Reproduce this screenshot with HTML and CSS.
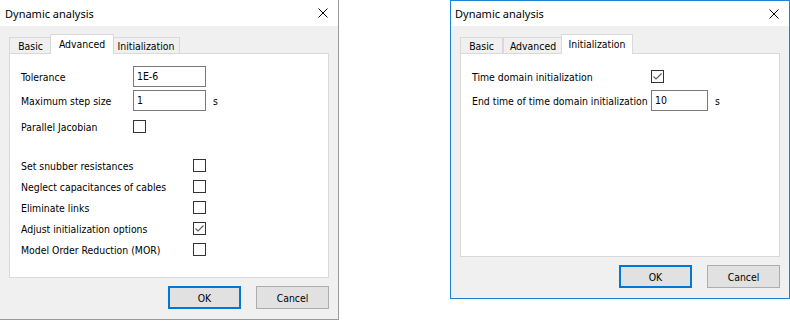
FILE: index.html
```html
<!DOCTYPE html>
<html lang="en">
<head>
    <meta charset="UTF-8">
    <meta name="viewport" content="width=device-width, initial-scale=1.0">
    <title>Dynamic analysis</title>
    <link rel="stylesheet" href="styles.css">
</head>
<body>
    <div class="desk">
        <!-- inactive window, Advanced tab -->
        <div class="dialog dialog-back">
            <div class="titlebar">
                <span class="title">Dynamic analysis</span>
                <svg class="close" width="10" height="10" viewBox="0 0 10 10"><path d="M0.5 0.5L9.5 9.5M9.5 0.5L0.5 9.5" stroke="#000" stroke-width="1" fill="none"/></svg>
            </div>
            <div class="body">
                <div class="tabs">
                    <div class="tab tab-basic">Basic</div>
                    <div class="tab tab-adv current">Advanced</div>
                    <div class="tab tab-init">Initialization</div>
                </div>
                <div class="panel panel-adv">
                    <div class="row">
                        <span class="lbl lbl-short">Tolerance</span>
                        <div class="field">1E-6</div>
                    </div>
                    <div class="row row-gap3">
                        <span class="lbl lbl-short">Maximum step size</span>
                        <div class="field">1</div>
                        <span class="unit">s</span>
                    </div>
                    <div class="row row-gap5">
                        <span class="lbl lbl-short">Parallel Jacobian</span>
                        <span class="check"></span>
                    </div>
                    <div class="row row-group">
                        <span class="lbl lbl-long">Set snubber resistances</span>
                        <span class="check"></span>
                    </div>
                    <div class="row">
                        <span class="lbl lbl-long">Neglect capacitances of cables</span>
                        <span class="check"></span>
                    </div>
                    <div class="row">
                        <span class="lbl lbl-long">Eliminate links</span>
                        <span class="check"></span>
                    </div>
                    <div class="row">
                        <span class="lbl lbl-long">Adjust initialization options</span>
                        <span class="check"><svg width="11" height="11" viewBox="0 0 11 11"><path d="M1.5 5.5L4 8L9.5 2.5" stroke="#5b5b5b" stroke-width="1.1" fill="none"/></svg></span>
                    </div>
                    <div class="row">
                        <span class="lbl lbl-long">Model Order Reduction (MOR)</span>
                        <span class="check"></span>
                    </div>
                </div>
                <div class="footer">
                    <button class="btn default">OK</button>
                    <button class="btn">Cancel</button>
                </div>
            </div>
        </div>

        <!-- active window, Initialization tab -->
        <div class="dialog dialog-front">
            <div class="titlebar">
                <span class="title">Dynamic analysis</span>
                <svg class="close" width="10" height="10" viewBox="0 0 10 10"><path d="M0.5 0.5L9.5 9.5M9.5 0.5L0.5 9.5" stroke="#000" stroke-width="1" fill="none"/></svg>
            </div>
            <div class="body">
                <div class="tabs">
                    <div class="tab tab-basic">Basic</div>
                    <div class="tab tab-adv">Advanced</div>
                    <div class="tab tab-init current">Initialization</div>
                </div>
                <div class="panel panel-init">
                    <div class="row">
                        <span class="lbl lbl-init">Time domain initialization</span>
                        <span class="check"><svg width="11" height="11" viewBox="0 0 11 11"><path d="M1.5 5.5L4 8L9.5 2.5" stroke="#5b5b5b" stroke-width="1.1" fill="none"/></svg></span>
                    </div>
                    <div class="row row-gap3">
                        <span class="lbl lbl-init">End time of time domain initialization</span>
                        <div class="field field-small">10</div>
                        <span class="unit">s</span>
                    </div>
                </div>
                <div class="footer">
                    <button class="btn default">OK</button>
                    <button class="btn">Cancel</button>
                </div>
            </div>
        </div>
    </div>
</body>
</html>
```

FILE: styles.css
```css
*{
    padding: 0;
    margin: 0;
    box-sizing: border-box;
}

body{
    background: #fff;
    font-family: "DejaVu Sans Condensed", "DejaVu Sans", sans-serif;
    font-stretch: condensed;
    font-size: 10.4px;
    color: #000;
}

.desk{
    width: 790px;
    display: flex;
    justify-content: space-between;
    align-items: flex-start;
}

/* 窗口 */
.dialog{
    background: #f0f0f0;
}

.dialog-back{
    width: 339px;
    border-right: 1px solid #9a9a9a;
    border-bottom: 1px solid #9a9a9a;
}

.dialog-front{
    width: 340px;
    border: 1px solid #1883d7;
}

.titlebar{
    height: 26px;
    background: #fff;
    display: flex;
    align-items: center;
    justify-content: space-between;
    padding: 0 10px 0 5px;
}

.dialog-front .titlebar{
    height: 25px;
    padding: 0 10px 0 4px;
}

.title{
    font-family: "Noto Sans", sans-serif;
    font-stretch: normal;
    font-size: 11px;
}

.close{
    display: block;
}

.body{
    padding: 0 9px 10px;
}

/* 选项卡 */
.tabs{
    height: 27px;
    display: flex;
    align-items: flex-end;
}

.tab{
    box-sizing: content-box;
    height: 14px;
    padding-top: 1px;
    border: 1px solid #d9d9d9;
    border-bottom: none;
    background: #f0f0f0;
    text-align: center;
    line-height: 14px;
}

.tab-basic{
    width: 41px;
}

.tab-adv{
    width: 58px;
}

.tab-init{
    width: 66px;
}

.tab.current{
    position: relative;
    z-index: 1;
    height: 19px;
    padding: 0 2px;
    margin: 0 -2px -1px;
    background: #fff;
    line-height: 18px;
}

.panel{
    background: #fff;
    border: 1px solid #d9d9d9;
    padding: 12px 11px 0;
}

.panel-adv{
    height: 225px;
}

.panel-init{
    height: 204px;
}

.row{
    height: 21px;
    display: flex;
    align-items: center;
}

.row-gap3{
    margin-top: 3px;
}

.row-gap5{
    margin-top: 5px;
}

.row-group{
    margin-top: 18px;
}

.lbl{
    flex: none;
    white-space: nowrap;
}

.lbl-short{
    width: 112px;
}

.lbl-long{
    width: 172px;
}

.lbl-init{
    width: 179px;
}

.field{
    width: 73px;
    height: 21px;
    border: 1px solid #7a7a7a;
    background: #fff;
    padding-left: 3px;
    line-height: 19px;
}

.field-small{
    width: 57px;
}

.unit{
    margin-left: 7px;
}

.check{
    width: 13px;
    height: 13px;
    border: 1px solid #333;
    background: #fff;
    display: flex;
}

/* 按钮 */
.footer{
    margin-top: 8px;
    display: flex;
    justify-content: flex-end;
    gap: 15px;
}

.btn{
    width: 73px;
    height: 23px;
    border: 1px solid #adadad;
    background: #e1e1e1;
    font: inherit;
    color: #000;
}

.btn.default{
    border: 2px solid #0078d7;
}
```
